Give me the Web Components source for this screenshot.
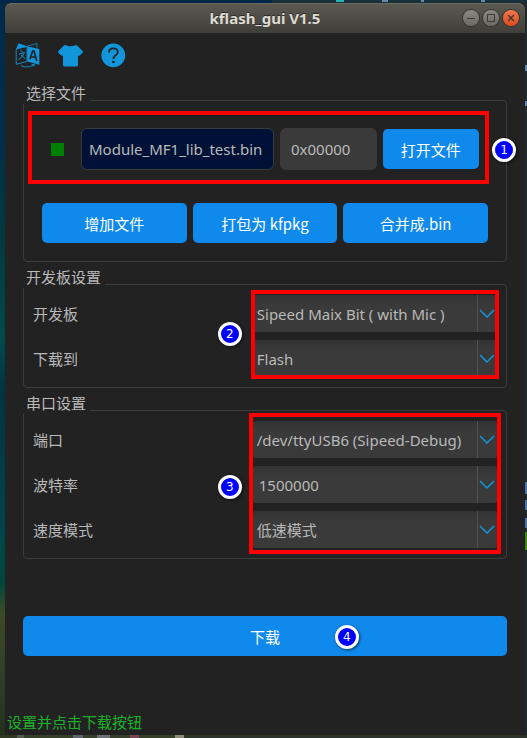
<!DOCTYPE html>
<html lang="zh-CN">
<head>
<meta charset="utf-8">
<meta name="viewport" content="width=device-width, initial-scale=1">
<title>kflash_gui V1.5</title>
<style>
  body {
    margin: 0;
    font: 15px/20px "Noto Sans", "Noto Sans CJK SC", sans-serif;
    color: #b9b9b9;
    --panel: #222222;
    --accent: #1089ec;
    --icon: #1296db;
    --red: #ff0000;
  }
</style>
</head>
<body>
<kflash-app></kflash-app>

<script>
const define = (name, html, setup) => {
  const template = document.createElement("template");
  template.innerHTML = html;
  customElements.define(name, class extends HTMLElement {
    constructor() {
      super();
      this.attachShadow({ mode: "open" }).append(template.content.cloneNode(true));
    }
    connectedCallback() {
      if (setup) setup(this, this.shadowRoot);
    }
  });
};

/* Numbered step marker */
define("step-badge", `
  <style>
    :host {
      position: absolute; z-index: 3; box-sizing: border-box;
      width: 24px; height: 24px; border: 3px solid #fff; border-radius: 50%;
      background: #0000ff; color: #fff; box-shadow: 1px 1px 3px #0009;
      font: 12px/18px "DejaVu Sans", sans-serif; text-align: center;
    }
  </style><slot></slot>`);

/* Red outline laid over a set of controls */
define("step-frame", `
  <style>
    :host {
      position: absolute; z-index: 2; box-sizing: border-box;
      border: 4px solid var(--red); pointer-events: none;
    }
  </style>`);

define("push-button", `
  <style>
    :host { display: block; min-width: 0; }
    button {
      display: block; width: 100%; height: 40px; padding: 2px 0 0; border: 0; border-radius: 5px;
      background: var(--accent); color: #fff; font: 15px/20px "Noto Sans CJK SC", sans-serif; cursor: pointer;
    }
  </style><button type="button"><slot></slot></button>`);

define("text-field", `
  <style>
    :host { display: block; min-width: 0; }
    input {
      box-sizing: border-box; display: block; width: 100%; height: 42px; margin: 0;
      padding: 0 0 0 var(--pad, 10px); border: 1px solid #3a3a3a; border-radius: 6px;
      background: var(--fill, #3a3a3a); color: #b9b9b9; font: inherit; outline: 0;
    }
  </style><input type="text">`,
  (host, root) => {
    const input = root.querySelector("input");
    input.value = host.getAttribute("value");
    input.setAttribute("aria-label", host.getAttribute("label"));
  });

define("title-bar", `
  <style>
    :host {
      display: grid; grid-template-columns: 1fr auto 1fr; align-items: center;
      height: 30px; padding: 0 6px; border-radius: 7px 7px 0 0;
      background: linear-gradient(#5c5a51, #3f3e39); box-shadow: inset 0 1px #6b695f;
      box-sizing: border-box;
    }
    h1 { grid-column: 2; margin: 0; font-size: 15px; line-height: 20px; font-weight: 700; color: #dfdbd2; text-shadow: 0 -1px #2b2a27; }
    div { display: flex; justify-content: flex-end; gap: 4px; }
    button {
      display: block; width: 16px; height: 16px; padding: 0; border: 0; border-radius: 50%;
      background: linear-gradient(#8a8880, #6b6962); box-shadow: 0 0 0 1px #33322e;
    }
    button.close { background: linear-gradient(#f4764d, #df4b1c); }
    svg { display: block; fill: none; stroke: #3a3934; }
  </style>
  <h1><slot></slot></h1>
  <div>
    <button type="button" aria-label="最小化"><svg width="16" height="16"><path d="M4 8.5h8"/></svg></button>
    <button type="button" aria-label="最大化"><svg width="16" height="16"><path d="M4.5 4.5h7v7h-7z"/></svg></button>
    <button type="button" aria-label="关闭" class="close"><svg width="16" height="16"><path d="M5 5l6 6M11 5l-6 6" stroke-width="1.4"/></svg></button>
  </div>`);

define("tool-bar", `
  <style>
    :host { display: flex; gap: 18px; padding: 10px 10px 0; }
    button { width: 25px; height: 25px; padding: 0; border: 0; background: none; color: var(--icon); }
    svg { display: block; overflow: visible; }
  </style>
  <button type="button" aria-label="语言">
    <svg width="25" height="25" viewBox="0 0 25 27" preserveAspectRatio="none" fill="none" stroke="currentColor">
      <path d="M3.5 .3L12.5 3.4L1 6.8z" fill="currentColor" stroke="none"/>
      <path d="M12.5 3.5L22 .5V5" stroke-width=".8"/>
      <path d="M1.2 6.5L12 3.8V20L1.2 23z" stroke-width=".9"/>
      <path d="M12.3 3.4L24.3 6.6V23.4L12.3 20z" fill="currentColor" stroke="none"/>
      <path d="M5.5 8l2.5 1.8M4 12l5.5-1.6Q8 15 3.6 18M6 13l4.5 4"/>
      <path d="M15 17.5L17.6 8.8H19L21.8 19.4M16 14.6l4.6 1" stroke="#222" stroke-width="1.7"/>
      <path d="M6 24.5Q12 27.6 18.5 24M16.5 23.4L19.6 23L18.4 25.6" stroke-width=".9"/>
    </svg>
  </button>
  <button type="button" aria-label="皮肤">
    <svg width="25" height="25" viewBox="0 0 25 25" fill="currentColor">
      <path d="M7.5 2Q12.5 4.6 17.5 2Q18.6 2 19.4 2.7L24.8 8.2Q25.2 9 24.6 9.7L21.7 12.6Q21 13 20.4 12.5L20 12.2V22Q20 23.6 18.4 23.6H6.6Q5 23.6 5 22V12.2L4.6 12.5Q4 13 3.3 12.6L.4 9.7Q-.2 9 .2 8.2L5.6 2.7Q6.4 2 7.5 2z"/>
    </svg>
  </button>
  <button type="button" aria-label="帮助">
    <svg width="25" height="25" viewBox="0 0 25 25" fill="none">
      <circle cx="12.3" cy="12.3" r="11.9" fill="currentColor"/>
      <path d="M8 9.5Q8 5.4 12.4 5.4Q16.8 5.4 16.8 9Q16.8 11 14.4 12.6Q12.4 13.9 12.4 16" stroke="#222" stroke-width="1.8"/>
      <path d="M11.2 17.8h2.4v2.2h-2.4z" fill="#222"/>
    </svg>
  </button>`);

define("group-panel", `
  <style>
    :host { display: block; }
    fieldset { margin: 0; padding: 0; border: 0; min-width: 0; }
    legend { position: relative; z-index: 1; padding: 0 4px 2px 3px; line-height: 18px; background: var(--panel); }
    div { position: relative; margin-top: -4px; border: 1px solid #3d3d3d; border-radius: 4px; }
  </style>
  <fieldset><legend></legend><div><slot></slot></div></fieldset>`,
  (host, root) => { root.querySelector("legend").textContent = host.getAttribute("legend"); });

define("option-row", `
  <style>
    :host { display: grid; grid-template-columns: 9fr 10fr; align-items: center; }
    span { display: grid; grid-template-columns: minmax(0, 1fr) 20px; height: 37px; }
    select {
      appearance: none; grid-area: 1 / 1 / 2 / 3; width: 100%; height: 37px; margin: 0; border: 0; border-radius: 3px;
      padding: 0 20px 0 4px; color: #b9b9b9; font: inherit;
      background: linear-gradient(#333333, #3a3a3a 30%);
    }
    :host([editable]) select { padding-left: 6px; }
    svg { grid-area: 1 / 2; display: block; width: 20px; height: 37px; pointer-events: none; z-index: 1; box-sizing: border-box; border-left: 1px solid #555050; }
  </style>
  <label for="field"></label>
  <span>
    <select id="field"><option></option></select>
    <svg viewBox="0 0 19 37" fill="none" stroke="#1296db" stroke-width="1.5"><path d="M2 15l7 7l7-7"/></svg>
  </span>`,
  (host, root) => {
    root.querySelector("label").textContent = host.getAttribute("label");
    root.querySelector("option").textContent = host.getAttribute("value");
  });

define("file-panel", `
  <style>
    :host { display: block; padding: 27px 18px 18px; }
    .file { position: relative; display: flex; align-items: center; gap: 6px; padding: 0 9px; }
    i { flex: none; width: 13px; height: 13px; margin-right: 11px; background: #008000; }
    .path { flex: 2 1 0; --fill: #001137; --pad: 7px; }
    .address, .file push-button { flex: 1 1 0; }
    .actions { display: grid; grid-template-columns: repeat(3, 1fr); gap: 6px; margin-top: 33px; }
    step-frame { inset: -17px -1px -14px -14px; }
    step-badge { right: -28px; top: 10px; }
  </style>
  <div class="file">
    <i></i>
    <text-field class="path" label="文件" value="Module_MF1_lib_test.bin"></text-field>
    <text-field class="address" label="地址" value="0x00000"></text-field>
    <push-button>打开文件</push-button>
    <step-frame></step-frame>
    <step-badge>1</step-badge>
  </div>
  <div class="actions">
    <push-button>增加文件</push-button>
    <push-button>打包为 kfpkg</push-button>
    <push-button>合并成.bin</push-button>
  </div>`);

define("option-list", `
  <style>
    :host { display: block; padding: 10px 9px; }
    div { position: relative; display: grid; gap: 8px; }
    step-frame { left: calc(100% * 9 / 19 - var(--out)); right: calc(0px - var(--out)); top: var(--up); bottom: var(--down); }
    step-badge { right: calc(100% * 10 / 19 + 11px); top: calc(50% - var(--lift)); }
  </style>
  <div>
    <slot></slot>
    <step-frame></step-frame>
    <step-badge></step-badge>
  </div>`,
  (host, root) => { root.querySelector("step-badge").textContent = host.getAttribute("step"); });

define("kflash-app", `
  <style>
    :host {
      display: flex; box-sizing: border-box; min-height: 100vh; padding: 3px 2px 3px 5px;
      background:
        linear-gradient(90deg, #0000 336px, #2bb5b0 336px 344px, #0000 344px 382px, #6688aa 382px 388px, #0000 388px 421px, #6688aa 421px 424px, #0000 424px 481px, #6688aa 481px 485px, #0000 485px) 0 0 / 100% 2px no-repeat,
        linear-gradient(90deg, #00264a 272px, #17303a 272px) 0 0 / 100% 3px no-repeat,
        linear-gradient(90deg, #2d3a24 0 17px, #565c4b 17px 24px, #34402a 24px 73px, #5d6670 73px 83px, #34402a 83px 97px, #6b7274 97px 110px, #34402a 110px 130px, #7a4452 130px 139px, #34402a 139px 175px, #8a8c78 175px 184px, #2c3428 184px) 0 100% / 100% 3px no-repeat,
        linear-gradient(#0000 65px, #5f86ad 65px 71px, #0000 71px 101px, #5f86ad 101px 106px, #0000 106px 482px, #4c73a8 482px 494px, #0000 494px 500px, #4c73a8 500px 510px, #0000 510px 518px, #4c73a8 518px 528px, #0000 528px 532px, #3f8a0a 532px 550px, #0000 550px) 100% 0 / 2px 100% no-repeat,
        linear-gradient(#002a4c, #002f48 20%, #00393f 32%, #004a4c 46%, #00333f 53%, #00464a 73%, #00463c 79%, #3c4a26 83%, #33402a 90%, #22301c) 0 0 / 5px 100% no-repeat,
        #20292b;
    }
    main { flex: 1; min-width: 0; display: flex; flex-direction: column; border-radius: 7px 7px 0 0; background: var(--panel); }
    form { display: flex; flex-direction: column; gap: 6px; padding: 16px 18px 0; }
    .download { position: relative; margin-top: 51px; }
    .download step-badge { left: calc(64% + 2px); top: 9px; }
    .board { --out: 2px; --up: -5px; --down: -2px; --lift: 14px; }
    .serial { --out: 4px; --up: -8px; --down: -6px; --lift: 10px; }
    footer { margin-top: auto; padding: 0 2px 3px; color: #1cb02a; }
  </style>
  <main>
    <title-bar>kflash_gui V1.5</title-bar>
    <tool-bar></tool-bar>
    <form>
      <group-panel legend="选择文件"><file-panel></file-panel></group-panel>
      <group-panel legend="开发板设置">
        <option-list class="board" step="2">
          <option-row label="开发板" value="Sipeed Maix Bit ( with Mic )"></option-row>
          <option-row label="下载到" value="Flash"></option-row>
        </option-list>
      </group-panel>
      <group-panel legend="串口设置">
        <option-list class="serial" step="3">
          <option-row label="端口" value="/dev/ttyUSB6 (Sipeed-Debug)"></option-row>
          <option-row label="波特率" value="1500000" editable></option-row>
          <option-row label="速度模式" value="低速模式"></option-row>
        </option-list>
      </group-panel>
      <div class="download">
        <push-button>下载</push-button>
        <step-badge>4</step-badge>
      </div>
    </form>
    <footer>设置并点击下载按钮</footer>
  </main>`);
</script>
</body>
</html>
